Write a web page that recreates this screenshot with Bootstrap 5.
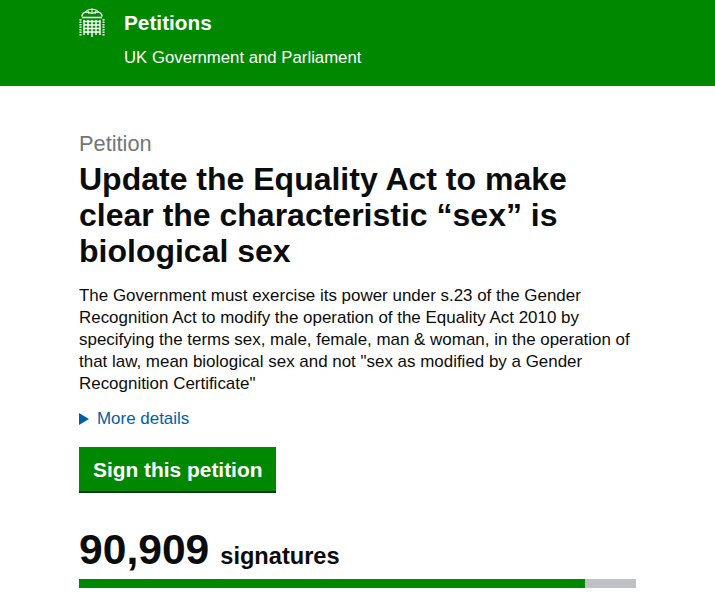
<!DOCTYPE html>
<html lang="en"><head><meta charset="utf-8"><title>Petitions</title>
<link href="https://cdn.jsdelivr.net/npm/bootstrap@5.3.0/dist/css/bootstrap.min.css" rel="stylesheet">
<style>
html,body{height:600px;overflow:hidden}
body{font-family:"Liberation Sans",Arial,sans-serif;color:#0b0c0c;background:#fff}
.hdr{background:#008800;height:86px;padding-left:79px;color:#fff}
.crest{width:26px;height:32px;margin-top:7px;flex:none}
.hdr-t{margin-left:19px;padding-top:10px}
.hdr-a{font-size:20.800px;font-weight:700;line-height:26px}
.hdr-b{font-size:16.750px;line-height:22px;margin-top:11px}
.main-c{padding:0 79px;box-sizing:content-box;width:557px}
.kick{font-size:21.800px;color:#6f777b;line-height:26px;margin-top:45px}
.ttl{font-size:32px;font-weight:700;line-height:36px;margin:4px 0 0}
.act{font-size:16.950px;line-height:22px;margin:16px 0 0}
.more{font-size:16.950px;color:#005ea5;line-height:22px;margin-top:13px;display:flex;align-items:center}
.tri{width:0;height:0;border-left:10px solid #005ea5;border-top:6px solid transparent;border-bottom:6px solid transparent;margin-right:8px}
.signb{background:#008800;color:#fff;font-size:20.900px;font-weight:700;height:46px;border:0;border-bottom:2px solid #003618;border-radius:0;padding:1px 14px 0;margin-top:17px;line-height:44px}
.cnt{display:flex;align-items:baseline;margin-top:33px;line-height:46px}
.num{font-size:42.600px;font-weight:700}
.lab{font-size:23.600px;font-weight:700;margin-left:11px}
.trk{height:9px;background:#bfc1c3;margin-top:0;border-radius:0}
.trk .progress-bar{background:#008800}
</style></head><body>
<header class="hdr d-flex">
<svg class="crest" viewBox="0 0 26 32" fill="#fff"><g fill="none" stroke="#fff"><path d="M3 9.500C3 5 7 4 13 6.500 19 4 23 5 23 9.500" stroke-width="1.300"/><path d="M6 5.500C7 3 11 2 13 2.500c2-.5 6 .5 7 3M13 1v6M9 3.500 10 7M17 3.500 16 7" stroke-width="1"/><path d="M3 10.500h20" stroke-width="1.500"/><path d="M5 13v15M9 13v15M13 13v17M17 13v15M21 13v15M5 14.500h16M5 18h16M5 21.500h16M5 25h16" stroke-width="1.400"/><path d="M1.500 12v17M24.500 12v17" stroke-width="2" stroke-dasharray="1.500 1"/></g></svg>
<div class="hdr-t"><div class="hdr-a">Petitions</div><div class="hdr-b">UK Government and Parliament</div></div>
</header>
<main class="main-c">
<div class="kick">Petition</div>
<h1 class="ttl">Update the Equality Act to make clear the characteristic “sex” is biological sex</h1>
<p class="act">The Government must exercise its power under s.23 of the Gender Recognition Act to modify the operation of the Equality Act 2010 by specifying the terms sex, male, female, man &amp; woman, in the operation of that law, mean biological sex and not "sex as modified by a Gender Recognition Certificate"</p>
<div class="more"><span class="tri"></span>More details</div>
<button class="btn signb">Sign this petition</button>
<div class="cnt"><span class="num">90,909</span><span class="lab">signatures</span></div>
<div class="progress trk"><div class="progress-bar" style="width:90.9%"></div></div>
</main>
<script src="https://cdn.jsdelivr.net/npm/bootstrap@5.3.0/dist/js/bootstrap.bundle.min.js"></script>
</body></html>
